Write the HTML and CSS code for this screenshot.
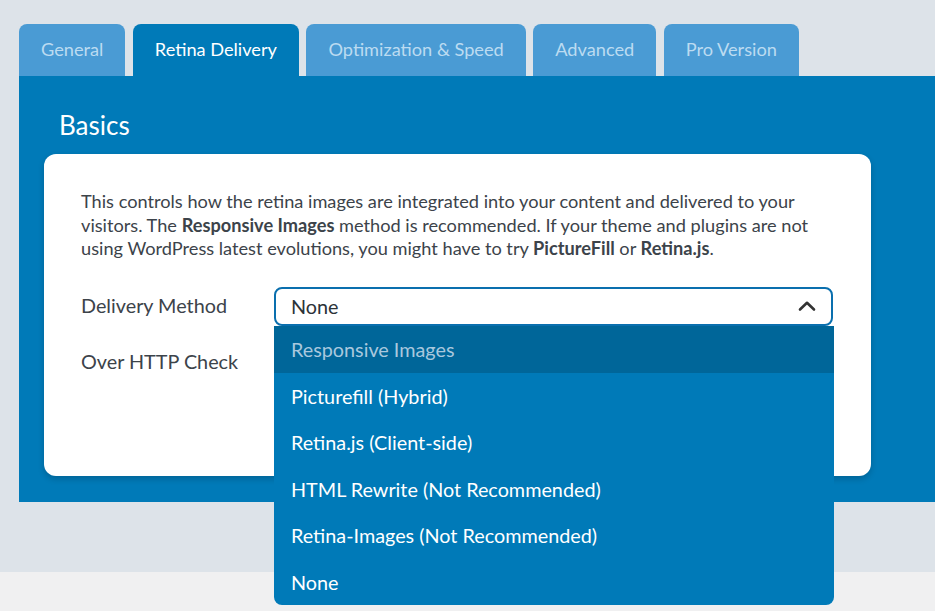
FILE: index.html
```html
<!DOCTYPE html>
<html lang="en">
<head>
  <meta charset="UTF-8">
  <meta name="viewport" content="width=device-width, initial-scale=1.0">
  <title>Retina Delivery</title>
  <link rel="stylesheet" href="styles.css">
</head>
<body>

  <div class="wrap">
    <div class="tabs">
      <div class="tab">General</div>
      <div class="tab active">Retina Delivery</div>
      <div class="tab">Optimization &amp; Speed</div>
      <div class="tab">Advanced</div>
      <div class="tab">Pro Version</div>
    </div>

    <div class="panel">
      <h2>Basics</h2>

      <div class="card">
        <p class="intro">This controls how the retina images are integrated into your content and delivered to your visitors. The <b>Responsive Images</b> method is recommended. If your theme and plugins are not using WordPress latest evolutions, you might have to try <b>PictureFill</b> or <b>Retina.js</b>.</p>

        <div class="row">
          <label>Delivery Method</label>
          <div class="select open">
            <div class="select-value">
              <span>None</span>
              <svg width="18" height="12" viewBox="0 0 18 12"><path d="M2 9.5 L9 2.8 L16 9.5" fill="none" stroke="#333" stroke-width="2.6" stroke-linecap="round" stroke-linejoin="round"/></svg>
            </div>
            <ul class="options">
              <li class="focused">Responsive Images</li>
              <li>Picturefill (Hybrid)</li>
              <li>Retina.js (Client-side)</li>
              <li>HTML Rewrite (Not Recommended)</li>
              <li>Retina-Images (Not Recommended)</li>
              <li>None</li>
            </ul>
          </div>
        </div>

        <div class="row">
          <label>Over HTTP Check</label>
        </div>
      </div>
    </div>
  </div>

  <div class="footer"></div>

</body>
</html>
```

FILE: styles.css
```css
body {
  margin: 0;
  font-family: Lato, "Open Sans", Arial, sans-serif;
  background-color: #f0f0f1;
  color: #3c434a;
}
.wrap {
  background-color: #dde3e9;
  height: 548px;
  padding: 24px 0 0 19px;
}
.footer {
  height: 39px;
  background-color: #f0f0f1;
}
.tabs {
  display: flex;
  gap: 7.5px;
}
.tab {
  height: 52px;
  line-height: 51px;
  padding: 0 22px;
  background-color: #4a9bd4;
  color: #bcdbf1;
  font-size: 18.2px;
  border-radius: 8px 8px 0 0;
}
.tab.active {
  background-color: #007ab8;
  color: #ffffff;
}
.panel {
  background-color: #007ab8;
  height: 426px;
  padding: 0 0 0 25px;
}
.panel h2 {
  margin: 0;
  padding: 34px 0 14px 15px;
  line-height: 30px;
  font-size: 26px;
  font-weight: normal;
  color: #ffffff;
}
.card {
  background-color: #ffffff;
  width: 827px;
  height: 322px;
  box-sizing: border-box;
  padding: 36px 37px 0 37px;
  border-radius: 12px;
  box-shadow: 0 3px 6px rgba(0, 0, 0, 0.18);
}
.intro {
  margin: 0 0 26px 0;
  font-size: 18.2px;
  line-height: 23.7px;
}
.intro b {
  font-weight: bold;
}
.row {
  display: flex;
  align-items: center;
  height: 39px;
  margin-bottom: 17px;
}
.row label {
  width: 193px;
  flex-shrink: 0;
  padding-bottom: 3px;
  font-size: 19.8px;
}
.select {
  position: relative;
  width: 559px;
  flex-shrink: 0;
}
.select-value {
  display: flex;
  align-items: center;
  justify-content: space-between;
  height: 39px;
  box-sizing: border-box;
  padding: 0 15px 0 15px;
  border: 2px solid #0a6fae;
  border-radius: 8px;
  background-color: #ffffff;
  font-size: 19.8px;
  color: #2c3338;
}
.select-value span {
  padding-bottom: 2px;
}
.select-value svg {
  margin-top: -2px;
}
.options {
  position: absolute;
  top: 39px;
  left: 0;
  right: -1px;
  margin: 0;
  padding: 0;
  list-style: none;
  background-color: #007ab8;
  border-radius: 0 0 8px 8px;
  overflow: hidden;
  z-index: 2;
}
.options li {
  height: 46.5px;
  line-height: 46px;
  padding-left: 17px;
  font-size: 19.8px;
  color: #ffffff;
}
.options li.focused {
  background-color: #006699;
  color: #a9c8de;
}
```
